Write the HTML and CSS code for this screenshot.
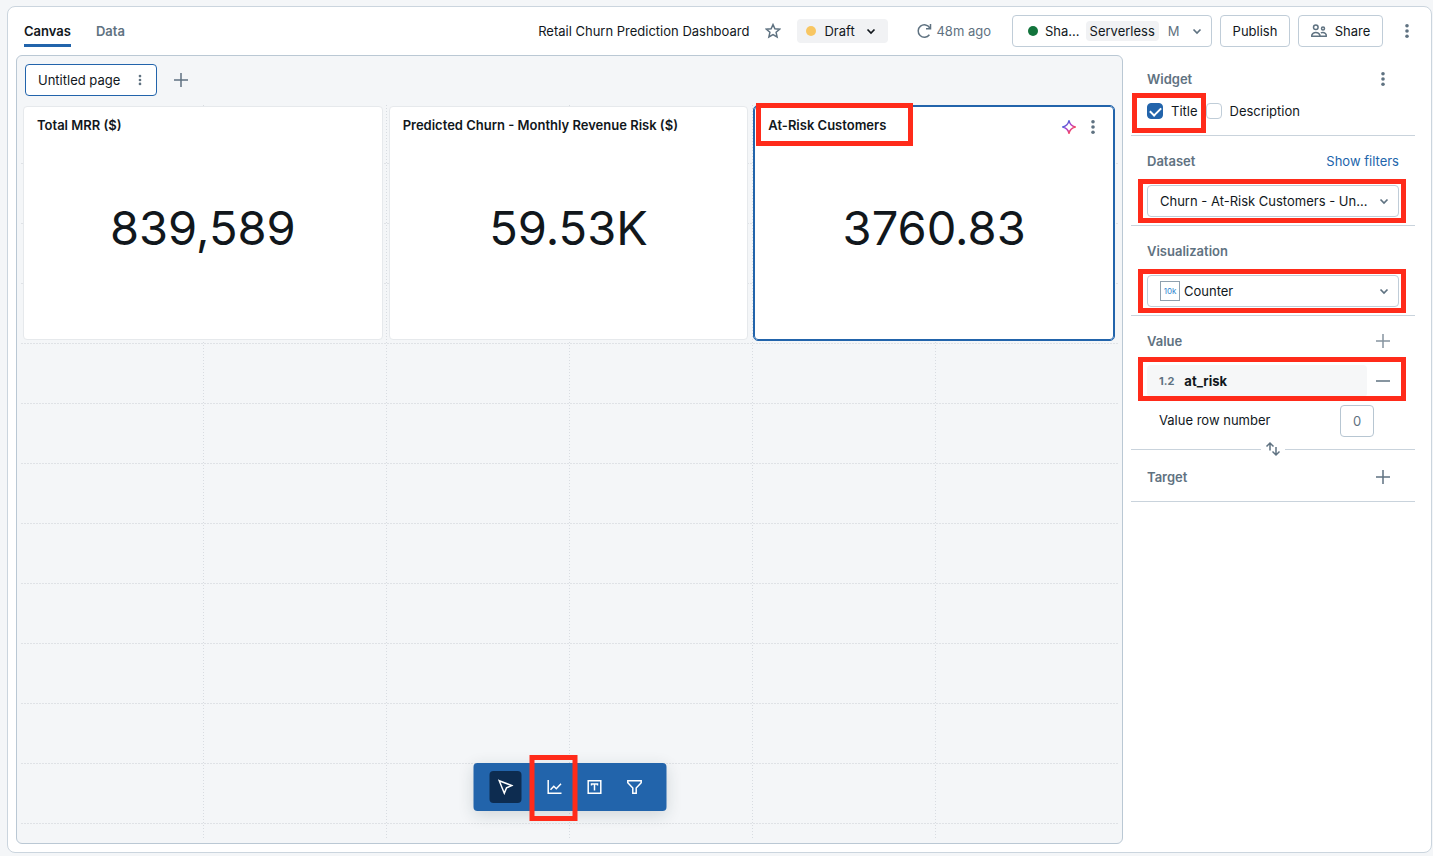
FILE: index.html
```html
<!DOCTYPE html>
<html lang="en">
<head>
<meta charset="utf-8">
<meta name="viewport" content="width=device-width, initial-scale=1">
<title>Retail Churn Prediction Dashboard</title>
<link rel="stylesheet" href="styles.css">
</head>
<body>
<svg class="defs" width="0" height="0" aria-hidden="true">
  <defs>
    <symbol id="kebab" viewBox="0 0 16 16"><circle cx="8" cy="2.8" r="1.8"/><circle cx="8" cy="8" r="1.8"/><circle cx="8" cy="13.2" r="1.8"/></symbol>
    <symbol id="plus" viewBox="0 0 16 16"><path d="M8 1v14M1 8h14" fill="none" stroke="currentColor" stroke-width="1.5"/></symbol>
    <symbol id="chevron" viewBox="0 0 16 16"><path d="M4.500 6.500 8 10l3.500-3.500" fill="none" stroke="currentColor" stroke-width="1.7"/></symbol>
  </defs>
</svg>
<div class="app">
  <header class="topbar">
    <nav class="tabs">
      <a class="tab tab-active" href="#canvas">Canvas</a>
      <a class="tab" href="#data">Data</a>
    </nav>
    <h1 class="doc-title">Retail Churn Prediction Dashboard</h1>
    <button class="icon-btn star" type="button" aria-label="Favorite">
      <svg class="icon" viewBox="0 0 16 16"><path d="M8 1.600 9.900 5.800l4.700.4-3.500 3.100 1 4.600L8 11.500l-4.100 2.400 1-4.600-3.500-3.100 4.700-.4z" fill="none" stroke="currentColor" stroke-width="1.5"/></svg>
    </button>
    <button class="draft" type="button"><span class="dot dot-draft"></span>Draft<svg class="icon draft-chevron"><use href="#chevron"/></svg></button>
    <button class="refresh" type="button">
      <svg class="icon" viewBox="0 0 16 16"><path d="M13.4 11.700A6.200 6.200 0 1 1 13.700 4.800M14.500 1v4.800H10" fill="none" stroke="currentColor" stroke-width="1.5"/></svg>48m ago
    </button>
    <button class="btn compute" type="button"><span class="dot dot-ready"></span><span class="compute-name">Sha...</span><span class="tag">Serverless</span><span class="size">M</span><svg class="icon muted"><use href="#chevron"/></svg></button>
    <button class="btn publish" type="button">Publish</button>
    <button class="btn share" type="button">
      <svg class="icon icon-line muted" viewBox="0 0 16 16"><circle cx="4.800" cy="4.200" r="2.300"/><circle cx="12" cy="5.500" r="1.500"/><path d="M.8 13.300v-1.300C1.600 10.200 3.100 9.500 4.800 9.500s3.300.7 4.100 2.500v1.300zM9.800 9.900c2.400-1 4.700-.2 5.400 1.800v1.600H8.900"/></svg>Share
    </button>
    <button class="icon-btn" type="button" aria-label="More actions"><svg class="icon"><use href="#kebab"/></svg></button>
  </header>

  <div class="workspace">
    <main class="canvas">
      <div class="pages">
        <button class="page-tab" type="button">Untitled page<svg class="icon-small"><use href="#kebab"/></svg></button>
        <button class="icon-btn" type="button" aria-label="Add page"><svg class="icon"><use href="#plus"/></svg></button>
      </div>
      <div class="board">
        <svg class="board-lines" aria-hidden="true">
          <defs><pattern id="rows" width="3" height="60" patternUnits="userSpaceOnUse"><rect y="58" width="2" height="1" fill="#dfe2e6"/></pattern></defs>
          <rect width="100%" height="100%" fill="url(#rows)"/>
          <g class="board-columns">
            <line x1="16.667%" x2="16.667%" y2="100%"/>
            <line x1="33.333%" x2="33.333%" y2="100%"/>
            <line x1="50%" x2="50%" y2="100%"/>
            <line x1="66.667%" x2="66.667%" y2="100%"/>
            <line x1="83.333%" x2="83.333%" y2="100%"/>
          </g>
        </svg>
        <div class="widgets">
          <section class="widget">
            <h2 class="widget-title">Total MRR ($)</h2>
            <p class="widget-value">839,589</p>
          </section>
          <section class="widget">
            <h2 class="widget-title">Predicted Churn - Monthly Revenue Risk ($)</h2>
            <p class="widget-value">59.53K</p>
          </section>
          <section class="widget widget-selected">
            <h2 class="widget-title marked mark-heading">At-Risk Customers</h2>
            <div class="widget-actions">
              <button class="bare" type="button" aria-label="Assistant">
                <svg class="icon" viewBox="0 0 16 16"><defs><linearGradient id="spark" x1="0" y1="0" x2="1" y2="1"><stop offset=".2" stop-color="#4169dc"/><stop offset=".5" stop-color="#b83cc8"/><stop offset=".8" stop-color="#ff4b50"/></linearGradient></defs><path d="M8 1.700c.7 3.300 2 5.300 6.300 6.300-4.300 1-5.600 3-6.300 6.300C7.300 11 6 9 1.700 8 6 7 7.300 5 8 1.700z" fill="none" stroke="url(#spark)" stroke-width="1.5" stroke-linejoin="round"/></svg>
              </button>
              <button class="bare" type="button" aria-label="Widget menu"><svg class="icon"><use href="#kebab"/></svg></button>
            </div>
            <p class="widget-value">3760.83</p>
          </section>
        </div>
      </div>
      <div class="toolbar" role="toolbar" aria-label="Add to canvas">
        <button class="tool tool-active" type="button" aria-label="Select"><svg class="icon" viewBox="0 0 16 16"><path d="m1.700 1.700 12.600 4.900-5.300 2.300-2.200 5.300z" fill="none" stroke="currentColor" stroke-width="1.500"/></svg></button>
        <button class="tool marked mark-tool" type="button" aria-label="Add visualization"><svg class="icon" viewBox="0 0 16 16"><path d="M1.700 1v13.300H15M4 10.800l3.300-3.500L9.800 9.700l4.700-4.900" fill="none" stroke="currentColor" stroke-width="1.500"/></svg></button>
        <button class="tool" type="button" aria-label="Add text"><svg class="icon" viewBox="0 0 16 16"><path d="M1.700 1.700h12.600v12.600H1.700zM5 6.500V5h6v1.500M8 5v6.500" fill="none" stroke="currentColor" stroke-width="1.500"/></svg></button>
        <button class="tool" type="button" aria-label="Add filter"><svg class="icon" viewBox="0 0 16 16"><path d="M1.300 1.700h13.400v2.100L9.700 9v5.300H6.300V9l-5-5.200z" fill="none" stroke="currentColor" stroke-width="1.500"/></svg></button>
      </div>
    </main>

    <aside class="inspector">
      <section class="group group-first">
        <div class="row"><h2 class="label">Widget</h2><button class="icon-btn" type="button" aria-label="Widget options"><svg class="icon"><use href="#kebab"/></svg></button></div>
        <div class="checks">
          <label class="check marked mark-check"><input type="checkbox" checked>Title</label>
          <label class="check"><input type="checkbox">Description</label>
        </div>
      </section>
      <section class="group">
        <div class="row"><label class="label" for="dataset">Dataset</label><a class="link" href="#filters">Show filters</a></div>
        <div class="field marked mark-field">
          <select id="dataset" class="select"><option>Churn - At-Risk Customers - Un...</option></select>
          <svg class="icon field-chevron"><use href="#chevron"/></svg>
        </div>
      </section>
      <section class="group">
        <div class="row"><label class="label" for="viz">Visualization</label></div>
        <div class="field marked mark-field">
          <span class="viz-icon">10k</span>
          <select id="viz" class="select select-icon"><option>Counter</option></select>
          <svg class="icon field-chevron"><use href="#chevron"/></svg>
        </div>
      </section>
      <section class="group group-value">
        <div class="row"><h2 class="label">Value</h2><button class="icon-btn faded" type="button" aria-label="Add value"><svg class="icon"><use href="#plus"/></svg></button></div>
        <div class="value-row marked mark-value">
          <button class="value-field" type="button"><span class="type">1.2</span>at_risk</button>
          <button class="icon-btn" type="button" aria-label="Remove value"><svg class="icon" viewBox="0 0 16 16"><path d="M1 8h14" stroke="currentColor" stroke-width="1.500"/></svg></button>
        </div>
        <div class="number-row"><label class="number-label" for="rownum">Value row number</label><input id="rownum" class="number" type="text" inputmode="numeric" value="0"></div>
      </section>
      <div class="swap">
        <button class="bare" type="button" aria-label="Swap value and target"><svg class="icon" viewBox="0 0 16 16"><path d="M5 9.500V2M1.500 5.500 5 2l3.500 3.500M11 6v8M7.500 10.500 11 14l3.500-3.500" fill="none" stroke="currentColor" stroke-width="1.500"/></svg></button>
      </div>
      <section class="group group-target">
        <div class="row"><h2 class="label">Target</h2><button class="icon-btn" type="button" aria-label="Add target"><svg class="icon"><use href="#plus"/></svg></button></div>
      </section>
    </aside>
  </div>
</div>
</body>
</html>
```
FILE: styles.css
```css
* { box-sizing: border-box; }

body {
  margin: 0;
  min-height: 100vh;
  display: flex;
  padding: 6px 1px 3px 7px;
  background: #f4f6f8;
  color: #11171c;
  font: 13px/20px Inter, "Liberation Sans", sans-serif;
}

h1, h2, p { margin: 0; font-size: inherit; }
button, input, select { font: inherit; color: inherit; }
button { cursor: pointer; }
a { text-decoration: none; }

.defs { position: absolute; }

.icon { width: 16px; height: 16px; flex: none; fill: currentColor; }
.icon-line { fill: none; stroke: currentColor; stroke-width: 1.5; }
.icon-small { width: 12px; height: 12px; fill: #5f7281; }
.muted { color: #5f7281; }

.app {
  flex: 1;
  display: flex;
  flex-direction: column;
  min-width: 0;
  background: #fff;
  border: 1px solid #cbd5de;
  border-radius: 8px;
}

/* Top bar */
.topbar {
  display: flex;
  align-items: center;
  gap: 8px;
  height: 48px;
  padding: 0 8px 0 16px;
}

.tabs { display: flex; gap: 25px; margin-right: auto; }
.tab {
  padding: 6px 0 3px;
  border-bottom: 3px solid transparent;
  color: #5f7281;
  font-weight: 600;
}
.tab-active { color: #11171c; border-color: #2264ab; }

.doc-title { font-weight: 400; white-space: nowrap; }

.icon-btn {
  display: flex;
  align-items: center;
  justify-content: center;
  width: 32px;
  height: 32px;
  padding: 0;
  border: 0;
  background: none;
  color: #5f7281;
}
.bare { display: flex; padding: 0; border: 0; background: none; color: #5f7281; }

.draft {
  display: flex;
  align-items: center;
  width: 91px;
  height: 24px;
  padding: 0 9px;
  border: 0;
  border-radius: 4px;
  background: #f1f2f4;
}
.dot { width: 10px; height: 10px; border-radius: 50%; flex: none; }
.dot-draft { margin-right: 8px; background: #f8c662; }
.dot-ready { margin-right: 7px; background: #12743c; }
.draft-chevron { margin-left: auto; }

.refresh {
  display: flex;
  align-items: center;
  gap: 4px;
  margin: 0 13px 0 20px;
  padding: 0;
  border: 0;
  background: none;
  color: #5f7281;
  white-space: nowrap;
}

.star, .draft { flex: none; }

.btn {
  display: flex;
  align-items: center;
  justify-content: center;
  height: 32px;
  padding: 0;
  border: 1px solid #c0cdd8;
  border-radius: 4px;
  background: #fff;
}
.compute { width: 200px; padding: 0 6px 0 15px; justify-content: flex-start; }
.compute .tag {
  margin-left: 6px;
  padding: 0 4px;
  border-radius: 4px;
  background: #f1f2f4;
}
.compute .size { margin-left: 9px; color: #5f7281; }
.compute .icon { margin-left: auto; }
.publish { width: 70px; }
.share { width: 85px; gap: 8px; }

/* Canvas */
.workspace {
  flex: 1;
  display: flex;
  gap: 8px;
  padding: 0 16px 8px 8px;
}

.canvas {
  position: relative;
  flex: 1;
  display: flex;
  flex-direction: column;
  min-width: 0;
  padding: 8px 4px 4px;
  border: 1px solid #bac8d4;
  border-radius: 6px;
  background: #f4f6f8;
}

.pages { display: flex; align-items: center; gap: 8px; padding-left: 4px; }
.page-tab {
  display: flex;
  align-items: center;
  justify-content: space-between;
  width: 132px;
  height: 32px;
  padding: 0 10px 0 12px;
  border: 1px solid #2264ab;
  border-radius: 4px;
  background: #fff;
}

.board { position: relative; flex: 1; margin-top: 9px; padding: 1px 4px 1px 2px; }
.board-lines { position: absolute; inset: 0; width: 100%; height: 100%; }
.board-columns { stroke: #d8dce1; stroke-dasharray: 1 2; shape-rendering: crispEdges; }

.widgets {
  position: relative;
  display: grid;
  grid-template-columns: repeat(3, 1fr);
  gap: 6px;
}
.widget {
  position: relative;
  display: flex;
  flex-direction: column;
  height: 234px;
  padding: 8px 13px;
  border: 1px solid #e6e9ec;
  border-radius: 4px;
  background: #fff;
}
.widget-selected { border-color: #2264ab; outline: 1px solid #2264ab; }
.widget-title { align-self: flex-start; font-weight: 600; }
.widget-value {
  flex: 1;
  display: flex;
  align-items: center;
  justify-content: center;
  padding-bottom: 10px;
  font-size: 47px;
  line-height: 60px;
}
.widget-actions { position: absolute; top: 12px; right: 12px; display: flex; gap: 8px; }

.toolbar {
  position: absolute;
  bottom: 32px;
  left: 50%;
  transform: translateX(-50%);
  display: flex;
  gap: 8px;
  padding: 8px 16px;
  border-radius: 4px;
  background: #2264ab;
  box-shadow: 0 4px 16px rgba(27, 49, 57, .16);
}
.tool {
  display: flex;
  align-items: center;
  justify-content: center;
  width: 32px;
  height: 32px;
  padding: 0;
  border: 0;
  border-radius: 4px;
  background: none;
  color: #fff;
}
.tool-active { margin-right: 9px; background: #0d2c50; }

/* Inspector */
.inspector { width: 284px; flex: none; }
.group {
  display: flex;
  flex-direction: column;
  gap: 8px;
  padding: 9px 16px 8px;
  border-bottom: 1px solid #c9d3dc;
}
.group-first { gap: 0; padding-top: 8px; }
.group-value { padding-bottom: 0; border-bottom: 0; }
.group-target { padding-top: 0; }

.row { display: flex; align-items: center; justify-content: space-between; height: 32px; }
.label { color: #5f7281; font-weight: 600; }
.link { color: #2264ab; }

.checks { display: flex; align-items: center; gap: 8px; height: 32px; }
.check { display: flex; align-items: center; gap: 8px; }
.check input {
  display: flex;
  justify-content: center;
  appearance: none;
  width: 16px;
  height: 16px;
  margin: 0;
  border: 1px solid #c0cdd8;
  border-radius: 4px;
  background: #fff;
}
.check input:checked { border-color: #2264ab; background: #2264ab; }
.check input:checked::after {
  content: "";
  width: 5px;
  height: 9px;
  margin-top: 1px;
  border: solid #fff;
  border-width: 0 2px 2px 0;
  transform: rotate(45deg);
}

.field { position: relative; }
.select {
  display: block;
  appearance: none;
  width: 100%;
  height: 32px;
  padding: 0 24px 0 12px;
  border: 1px solid #c0cdd8;
  border-radius: 4px;
  background: #fff;
  text-overflow: ellipsis;
}
.select-icon { padding-left: 36px; }
.field-chevron { position: absolute; top: 8px; right: 7px; color: #5f7281; pointer-events: none; }
.viz-icon {
  position: absolute;
  top: 6px;
  left: 13px;
  width: 20px;
  height: 20px;
  border: 1px solid #8fa0ae;
  color: #2f86d0;
  font-size: 8px;
  line-height: 18px;
  text-align: center;
}

.value-row { display: flex; }
.value-field {
  flex: 1;
  display: flex;
  align-items: center;
  gap: 10px;
  height: 32px;
  padding: 0 12px;
  border: 0;
  border-radius: 4px;
  background: #f6f7f8;
  font-weight: 700;
}
.type { color: #5f7281; font-size: 11px; }
.faded { opacity: .75; }

.number-row {
  display: flex;
  align-items: flex-start;
  justify-content: space-between;
  padding: 0 25px 0 12px;
}
.number-label { padding-top: 5px; }
.number {
  width: 34px;
  height: 32px;
  padding: 0;
  border: 1px solid #b7c6d2;
  border-radius: 4px;
  background: #fff;
  color: #5f7281;
  text-align: center;
}

.swap { display: flex; align-items: center; gap: 4px; height: 24px; }
.swap::before, .swap::after { content: ""; flex: 1; height: 1px; background: #c9d3dc; }

/* Callout frames */
.marked { position: relative; }
.marked::after {
  content: "";
  position: absolute;
  z-index: 2;
  border: 5px solid #ff2b1a;
  pointer-events: none;
}
.mark-heading::after { inset: -12px -27px -11px -12px; }
.mark-tool::after { inset: -16px -7px -18px -9px; }
.mark-check::after { inset: -8px -8px -12px -15px; }
.mark-field::after { inset: -6px -7px -6px -9px; }
.mark-value::after { inset: -8px -7px -4px -9px; }
```
